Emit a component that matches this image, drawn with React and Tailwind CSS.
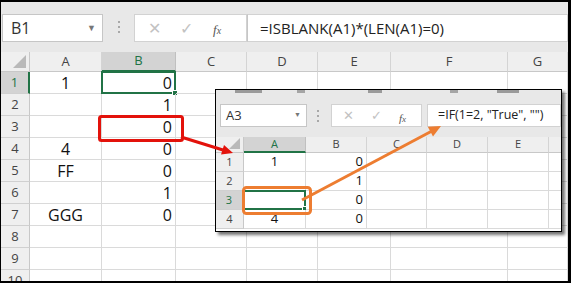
import React from 'react'

const mainCols = [
    { l: 'A', w: 'w-[72px]', align: 'justify-center' },
    { l: 'B', w: 'w-[74px]', align: 'justify-end pr-[3px]' },
    { l: 'C', w: 'w-[71px]', align: 'justify-center' },
    { l: 'D', w: 'w-[71px]', align: 'justify-center' },
    { l: 'E', w: 'w-[73px]', align: 'justify-center' },
    { l: 'F', w: 'w-[117px]', align: 'justify-center' },
    { l: 'G', w: 'w-[60px]', align: 'justify-center' },
]

const mainRows = [
    ['1', '0'], ['', '1'], ['', '0'], ['4', '0'], ['FF', '0'],
    ['', '1'], ['GGG', '0'], ['', ''], ['', ''], ['', ''],
]

const insetCols = [
    { l: 'A', w: 'w-[62px]', align: 'justify-center' },
    { l: 'B', w: 'w-[61px]', align: 'justify-end pr-[3px]' },
    { l: 'C', w: 'w-[60px]', align: 'justify-center' },
    { l: 'D', w: 'w-[61px]', align: 'justify-center' },
    { l: 'E', w: 'w-[61px]', align: 'justify-center' },
    { l: '', w: 'w-[20px]', align: 'justify-center' },
]

const insetRows = [['1', '0'], ['', '1'], ['', '0'], ['4', '0']]

const Dots = ({ className }) => (
    <div className={`flex flex-col gap-[3px] ${className}`}>
        <span className="w-[2px] h-[2px] bg-[#a8a8a8]" />
        <span className="w-[2px] h-[2px] bg-[#a8a8a8]" />
        <span className="w-[2px] h-[2px] bg-[#a8a8a8]" />
    </div>
)

const Corner = ({ size }) => (
    <svg width={size} height={size} viewBox="0 0 10 10" className="absolute right-[3px] bottom-[3px]">
        <polygon points="10,0 10,10 0,10" fill="#b9b9b9" />
    </svg>
)

const FxBox = ({ small }) => (
    <span className={`font-['Liberation_Serif',serif] italic text-[#555] ${small ? 'text-[11px]' : 'text-[13px]'}`}>
        f<span className={small ? 'text-[9px]' : 'text-[10px]'}>x</span>
    </span>
)

const App = () => {
    return (
        <div className="w-[571px] h-[283px] bg-white border-black border-l border-t-2 border-r-[3px] border-b-2 relative overflow-hidden font-['Open_Sans','Noto_Sans',sans-serif]">

            {/* Formula bar */}
            <div className="h-[50px] bg-[#e8e8e8] flex items-start pt-[12px]">
                <div className="ml-[1px] w-[101px] h-[28px] bg-white border border-[#c6c6c6] flex items-center justify-between pl-[8px] pr-[6px]">
                    <span className="text-[16px] text-[#333]">B1</span>
                    <span className="text-[9px] text-[#777]">▼</span>
                </div>
                <Dots className="ml-[15px] mt-[7px]" />
                <div className="ml-[14px] w-[113px] h-[28px] bg-white border border-[#d2d2d2] flex items-center">
                    <span className="ml-[13px] text-[16px] text-[#c2c2c2]">✕</span>
                    <span className="ml-[19px] text-[16px] text-[#c2c2c2]">✓</span>
                    <span className="ml-[20px]"><FxBox /></span>
                </div>
                <div className="flex-1 h-[28px] bg-white border border-[#d2d2d2] border-l-[#c6c6c6] flex items-center pl-[12px]">
                    <span className="text-[15px] text-[#222]">=ISBLANK(A1)*(LEN(A1)=0)</span>
                </div>
            </div>

            {/* Column headers */}
            <div className="flex h-[20px]">
                <div className="w-[29px] shrink-0 bg-[#efefef] border-r border-b border-[#c8c8c8] relative">
                    <Corner size={13} />
                </div>
                {mainCols.map((c) => (
                    <div
                        key={c.l}
                        className={`${c.w} shrink-0 flex items-center justify-center text-[13px] border-r ${c.l === 'B'
                            ? 'bg-[#d3d3d3] text-[#217346] border-[#c0c0c0] border-b-2 border-b-[#217346]'
                            : 'bg-[#efefef] text-[#444] border-[#d4d4d4] border-b border-b-[#c8c8c8]'}`}
                    >
                        {c.l}
                    </div>
                ))}
            </div>

            {/* Rows */}
            {mainRows.map((r, i) => (
                <div key={i} className="flex h-[22px]">
                    <div className={`w-[29px] shrink-0 flex items-center justify-center text-[13px] border-b border-[#d0d0d0] ${i === 0
                        ? 'bg-[#d3d3d3] text-[#217346] border-r-2 border-r-[#217346]'
                        : 'bg-[#efefef] text-[#444] border-r border-r-[#c8c8c8]'}`}>
                        {i + 1}
                    </div>
                    {mainCols.map((c, j) => (
                        <div key={c.l} className={`${c.w} shrink-0 relative flex items-center ${c.align} border-r border-b border-[#dadada] text-[16px] text-[#111]`}>
                            {r[j] || ''}
                            {i === 0 && j === 1 && (
                                <div className="absolute -left-px -top-px -right-px -bottom-px border-2 border-[#217346]">
                                    <span className="absolute right-[-4px] bottom-[-4px] w-[6px] h-[6px] bg-[#217346] border border-white" />
                                </div>
                            )}
                        </div>
                    ))}
                </div>
            ))}

            {/* Inset screenshot */}
            <div className="absolute left-[214px] top-[87px] w-[347px] h-[143px] bg-white border border-black shadow-[3px_3px_3px_rgba(0,0,0,0.55)] overflow-hidden">
                <div className="h-[47px] bg-[#e8e8e8] flex flex-col">
                    <div className="h-[4px] flex items-start">
                        <span className="ml-[19px] w-[27px] h-[3px] bg-[#9a9a9a]" />
                        <span className="ml-[35px] w-[8px] h-[3px] bg-[#a5a5a5]" />
                        <span className="ml-[63px] w-[14px] h-[3px] bg-[#9a9a9a]" />
                        <span className="ml-[68px] w-[8px] h-[3px] bg-[#a5a5a5]" />
                        <span className="ml-[39px] w-[22px] h-[3px] bg-[#9a9a9a]" />
                    </div>
                    <div className="flex items-start mt-[10px]">
                        <div className="ml-[4px] w-[87px] h-[23px] bg-white border border-[#c6c6c6] flex items-center justify-between pl-[5px] pr-[5px]">
                            <span className="text-[13px] text-[#333]">A3</span>
                            <span className="text-[7px] text-[#777]">▼</span>
                        </div>
                        <Dots className="ml-[10px] mt-[6px] gap-[2px]" />
                        <div className="ml-[12px] w-[91px] h-[23px] bg-white border border-[#d2d2d2] flex items-center">
                            <span className="ml-[11px] text-[13px] text-[#c2c2c2]">✕</span>
                            <span className="ml-[17px] text-[13px] text-[#c2c2c2]">✓</span>
                            <span className="ml-[17px]"><FxBox small /></span>
                        </div>
                        <div className="ml-[5px] flex-1 h-[23px] bg-white border border-[#d2d2d2] flex items-center pl-[10px]">
                            <span className="text-[12.5px] text-[#222] whitespace-nowrap">=IF(1=2, "True", "")</span>
                        </div>
                    </div>
                </div>

                <div className="flex h-[16px]">
                    <div className="w-[28px] shrink-0 bg-[#efefef] border-r border-b border-[#c8c8c8] relative">
                        <Corner size={11} />
                    </div>
                    {insetCols.map((c, j) => (
                        <div
                            key={j}
                            className={`${c.w} shrink-0 flex items-center justify-center text-[11px] border-r ${j === 0
                                ? 'bg-[#d3d3d3] text-[#217346] border-[#c0c0c0] border-b-2 border-b-[#217346]'
                                : 'bg-[#efefef] text-[#444] border-[#d4d4d4] border-b border-b-[#c8c8c8]'}`}
                        >
                            {c.l}
                        </div>
                    ))}
                </div>

                {insetRows.map((r, i) => (
                    <div key={i} className="flex h-[19px]">
                        <div className={`w-[28px] shrink-0 flex items-center justify-center text-[11px] border-b border-[#d0d0d0] ${i === 2
                            ? 'bg-[#d3d3d3] text-[#217346] border-r-2 border-r-[#217346]'
                            : 'bg-[#efefef] text-[#444] border-r border-r-[#c8c8c8]'}`}>
                            {i + 1}
                        </div>
                        {insetCols.map((c, j) => (
                            <div key={j} className={`${c.w} shrink-0 relative flex items-center ${c.align} border-r border-b border-[#dadada] text-[13px] text-[#111]`}>
                                {r[j] || ''}
                                {i === 2 && j === 0 && (
                                    <div className="absolute -left-px -top-px -right-px -bottom-px border-2 border-[#217346]">
                                        <span className="absolute right-[-3px] bottom-[-3px] w-[5px] h-[5px] bg-[#217346] border border-white" />
                                    </div>
                                )}
                            </div>
                        ))}
                    </div>
                ))}
            </div>

            {/* Annotations */}
            <svg className="absolute -left-px -top-[2px] pointer-events-none" width="571" height="283" viewBox="0 0 571 283">
                <rect x="99.5" y="116.5" width="83" height="24" rx="2" fill="none" stroke="#e3120b" strokeWidth="3" />
                <line x1="181" y1="137" x2="223" y2="150" stroke="#e3120b" strokeWidth="3" />
                <polygon points="233,153 221,154.5 224,144.9" fill="#e3120b" />

                <rect x="243.5" y="187.5" width="67" height="26" rx="3" fill="none" stroke="#ed7d31" strokeWidth="3" />
                <line x1="302" y1="200" x2="431" y2="131.5" stroke="#ed7d31" strokeWidth="3" />
                <polygon points="441,126 433,136.5 427.8,126.7" fill="#ed7d31" />
            </svg>
        </div>
    )
}

export default App
